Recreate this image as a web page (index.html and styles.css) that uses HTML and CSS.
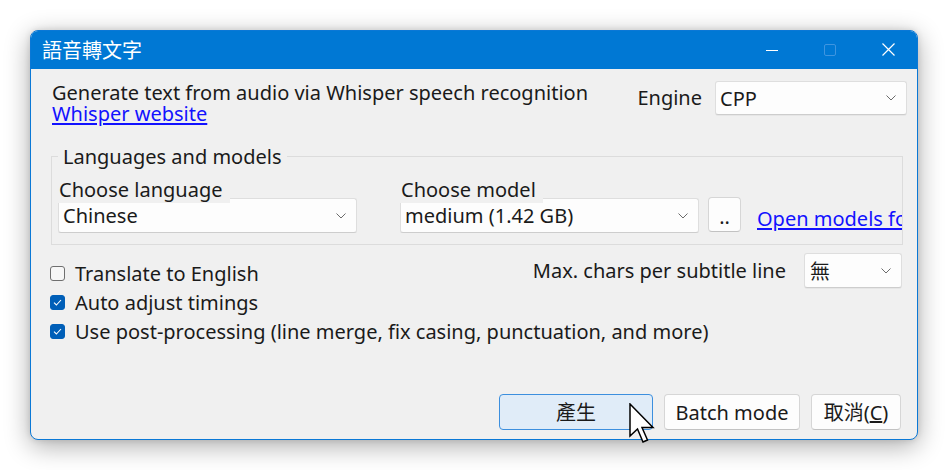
FILE: index.html
```html
<!DOCTYPE html>
<html lang="zh-Hant">
<head>
<meta charset="utf-8">
<title>語音轉文字</title>
<link rel="stylesheet" href="styles.css">
</head>
<body>
<div class="window">
  <div class="titlebar">
    <span class="title">語音轉文字</span>
    <div class="controls">
      <span class="ctl"><svg width="12" height="12" viewBox="0 0 12 12"><path d="M0 6.5H12" stroke="#fff" stroke-width="1"/></svg></span>
      <span class="ctl"><svg width="12" height="12" viewBox="0 0 12 12"><rect x="0.5" y="0.5" width="11" height="11" rx="1.5" fill="none" stroke="#3f95e0" stroke-width="1"/></svg></span>
      <span class="ctl"><svg width="13" height="13" viewBox="0 0 13 13"><path d="M0.5 0.5L12.5 12.5M12.5 0.5L0.5 12.5" stroke="#fff" stroke-width="1.2"/></svg></span>
    </div>
  </div>
  <div class="content">
    <div class="top-row">
      <div class="intro">
        <div>Generate text from audio via Whisper speech recognition</div>
        <a class="link" href="#">Whisper website</a>
      </div>
      <div class="engine">
        <span class="engine-label">Engine</span>
        <div class="combo engine-combo"><span>CPP</span><svg class="chev" width="10" height="6" viewBox="0 0 10 6"><path d="M0.5 0.5L5 5L9.5 0.5" fill="none" stroke="#6b6b6b" stroke-width="1"/></svg></div>
      </div>
    </div>

    <fieldset class="group">
      <legend>Languages and models</legend>
      <div class="group-row">
        <div class="field">
          <span class="field-label lang-label">Choose language</span>
          <div class="combo field-combo"><span>Chinese</span><svg class="chev" width="10" height="6" viewBox="0 0 10 6"><path d="M0.5 0.5L5 5L9.5 0.5" fill="none" stroke="#6b6b6b" stroke-width="1"/></svg></div>
        </div>
        <div class="field model-field">
          <span class="field-label model-label">Choose model</span>
          <div class="combo field-combo"><span>medium (1.42 GB)</span><svg class="chev" width="10" height="6" viewBox="0 0 10 6"><path d="M0.5 0.5L5 5L9.5 0.5" fill="none" stroke="#6b6b6b" stroke-width="1"/></svg></div>
        </div>
        <button class="btn dots">..</button>
        <a class="link models-link" href="#">Open models folder</a>
      </div>
    </fieldset>

    <div class="options-row">
      <div class="checks">
        <label class="check"><span class="box"></span>Translate to English</label>
        <label class="check"><span class="box on"><svg width="9" height="7" viewBox="0 0 9 7"><path d="M1 3.6L3.4 6L8 1" fill="none" stroke="#fff" stroke-width="1.1"/></svg></span>Auto adjust timings</label>
        <label class="check"><span class="box on"><svg width="9" height="7" viewBox="0 0 9 7"><path d="M1 3.6L3.4 6L8 1" fill="none" stroke="#fff" stroke-width="1.1"/></svg></span>Use post-processing (line merge, fix casing, punctuation, and more)</label>
      </div>
      <div class="maxchars">
        <span>Max. chars per subtitle line</span>
        <div class="combo max-combo"><span class="cjk">無</span><svg class="chev" width="10" height="6" viewBox="0 0 10 6"><path d="M0.5 0.5L5 5L9.5 0.5" fill="none" stroke="#6b6b6b" stroke-width="1"/></svg></div>
      </div>
    </div>

    <div class="buttons">
      <button class="btn primary cjk">產生</button>
      <button class="btn batch">Batch mode</button>
      <button class="btn cancel"><span class="cjk">取消</span>(<u>C</u>)</button>
    </div>
  </div>
</div>
<svg class="cursor" width="26" height="42" viewBox="0 0 26 42"><path d="M1 1V33L8.5 26L14 39L18.5 37L13 24.5H24Z" fill="#fff" stroke="#000" stroke-width="1.5" stroke-linejoin="miter"/></svg>
</body>
</html>
```
FILE: styles.css
```css
* { box-sizing: border-box; }
html, body { margin: 0; background: #ffffff; }
body {
  padding: 30px 0 0 30px;
  font-family: "Noto Sans", "Noto Sans CJK TC", sans-serif;
  font-size: 20px;
  line-height: 21px;
  color: #1a1a1a;
  position: relative;
  height: 470px;
  overflow: hidden;
}
.cjk { font-family: "Noto Sans CJK TC", "Noto Sans", sans-serif; }

.window {
  width: 888px;
  height: 410px;
  border: 1px solid #0a78d6;
  border-radius: 8px;
  overflow: hidden;
  display: flex;
  flex-direction: column;
  background: #f0f0f0;
  box-shadow: 0 6px 26px rgba(0,0,0,0.33), 0 0 6px rgba(0,0,0,0.12);
}
.titlebar {
  height: 38px;
  flex: none;
  background: #0078d4;
  display: flex;
  align-items: center;
  padding-left: 11px;
}
.title {
  font-family: "Noto Sans CJK TC", sans-serif;
  color: #ffffff;
  font-size: 20px;
  margin-top: -1px;
}
.controls { margin-left: auto; display: flex; height: 100%; }
.ctl {
  width: 58px;
  display: flex;
  align-items: center;
  justify-content: center;
  margin-top: -1px;
}

.content {
  flex: 1;
  display: flex;
  flex-direction: column;
  padding: 12px 0 9px 0;
  min-height: 0;
}
.top-row {
  display: flex;
  justify-content: space-between;
  padding: 0 10px 0 21px;
}
.intro { padding-top: 1px; white-space: nowrap; }
.link { color: #1212ff; text-decoration: underline; text-underline-offset: 2px; }
.engine { display: flex; align-items: flex-start; flex: none; }
.engine-label { margin-right: 13px; margin-top: 6px; }

.combo {
  background: #fdfdfd;
  border: 1px solid #dedede;
  border-bottom-color: #cdcdcd;
  border-radius: 3px;
  display: flex;
  align-items: center;
  padding: 0 10px 0 4px;
  box-shadow: 0 1px 0 rgba(0,0,0,0.04);
  flex: none;
  white-space: nowrap;
}
.combo .chev { margin-left: auto; flex: none; }
.engine-combo { width: 192px; height: 34px; }

.group {
  margin: 22px 14px 0 20px;
  padding: 0 0 11px 6px;
  border: 1px solid #dcdcdc;
  border-radius: 0;
  min-width: 0;
}
.group legend {
  margin-left: 0;
  padding: 0 5px;
  line-height: 21px;
}
.group-row {
  display: flex;
  align-items: flex-end;
  margin-top: 12px;
  overflow: hidden;
}
.field { display: flex; flex-direction: column; align-items: flex-start; width: 299px; flex: none; }
.model-field { margin-left: 43px; }
.field-label {
  background: #f0f0f0;
  padding: 0 0 3px 1px;
  margin-bottom: -5px;
  position: relative;
  z-index: 1;
  white-space: nowrap;
}
.lang-label { width: 172px; }
.model-label { width: 143px; }
.field-combo { width: 299px; height: 35px; }

.btn {
  font: inherit;
  color: #1a1a1a;
  background: #fdfdfd;
  border: 1px solid #d6d6d6;
  border-bottom-color: #c2c2c2;
  border-radius: 4px;
  padding: 0;
  line-height: 21px;
  flex: none;
  white-space: nowrap;
}
.dots { width: 33px; height: 35px; margin-left: 9px; margin-bottom: 1px; padding-top: 4px; }
.models-link { margin-left: 16px; margin-bottom: 4px; white-space: nowrap; flex: none; }

.options-row {
  display: flex;
  justify-content: space-between;
  margin-top: 8px;
  padding: 0 15px 0 19px;
}
.checks { display: flex; flex-direction: column; padding-top: 6px; white-space: nowrap; flex: 1 1 0; min-width: 0; }
.check { display: flex; align-items: center; height: 29px; }
.box {
  width: 15px; height: 15px;
  border: 1px solid #6f6f6f;
  border-radius: 3px;
  background: #f7f7f7;
  margin-right: 10px;
  display: flex; align-items: center; justify-content: center;
  flex: none;
}
.box.on { background: #005fb8; border-color: #005fb8; }
.maxchars { display: flex; align-items: center; align-self: flex-start; flex: none; white-space: nowrap; }
.maxchars > span { margin-right: 18px; }
.max-combo { width: 98px; height: 35px; padding-left: 5px; }

.buttons {
  margin-top: auto;
  display: flex;
  justify-content: flex-end;
  gap: 11px;
  padding-right: 16px;
}
.buttons .btn { height: 36px; }
.primary { width: 154px; background: #e0ecf8; border: 1px solid #3c8fde; }
.batch { width: 136px; }
.cancel { width: 90px; }

.cursor { position: absolute; left: 629px; top: 403px; }
```
